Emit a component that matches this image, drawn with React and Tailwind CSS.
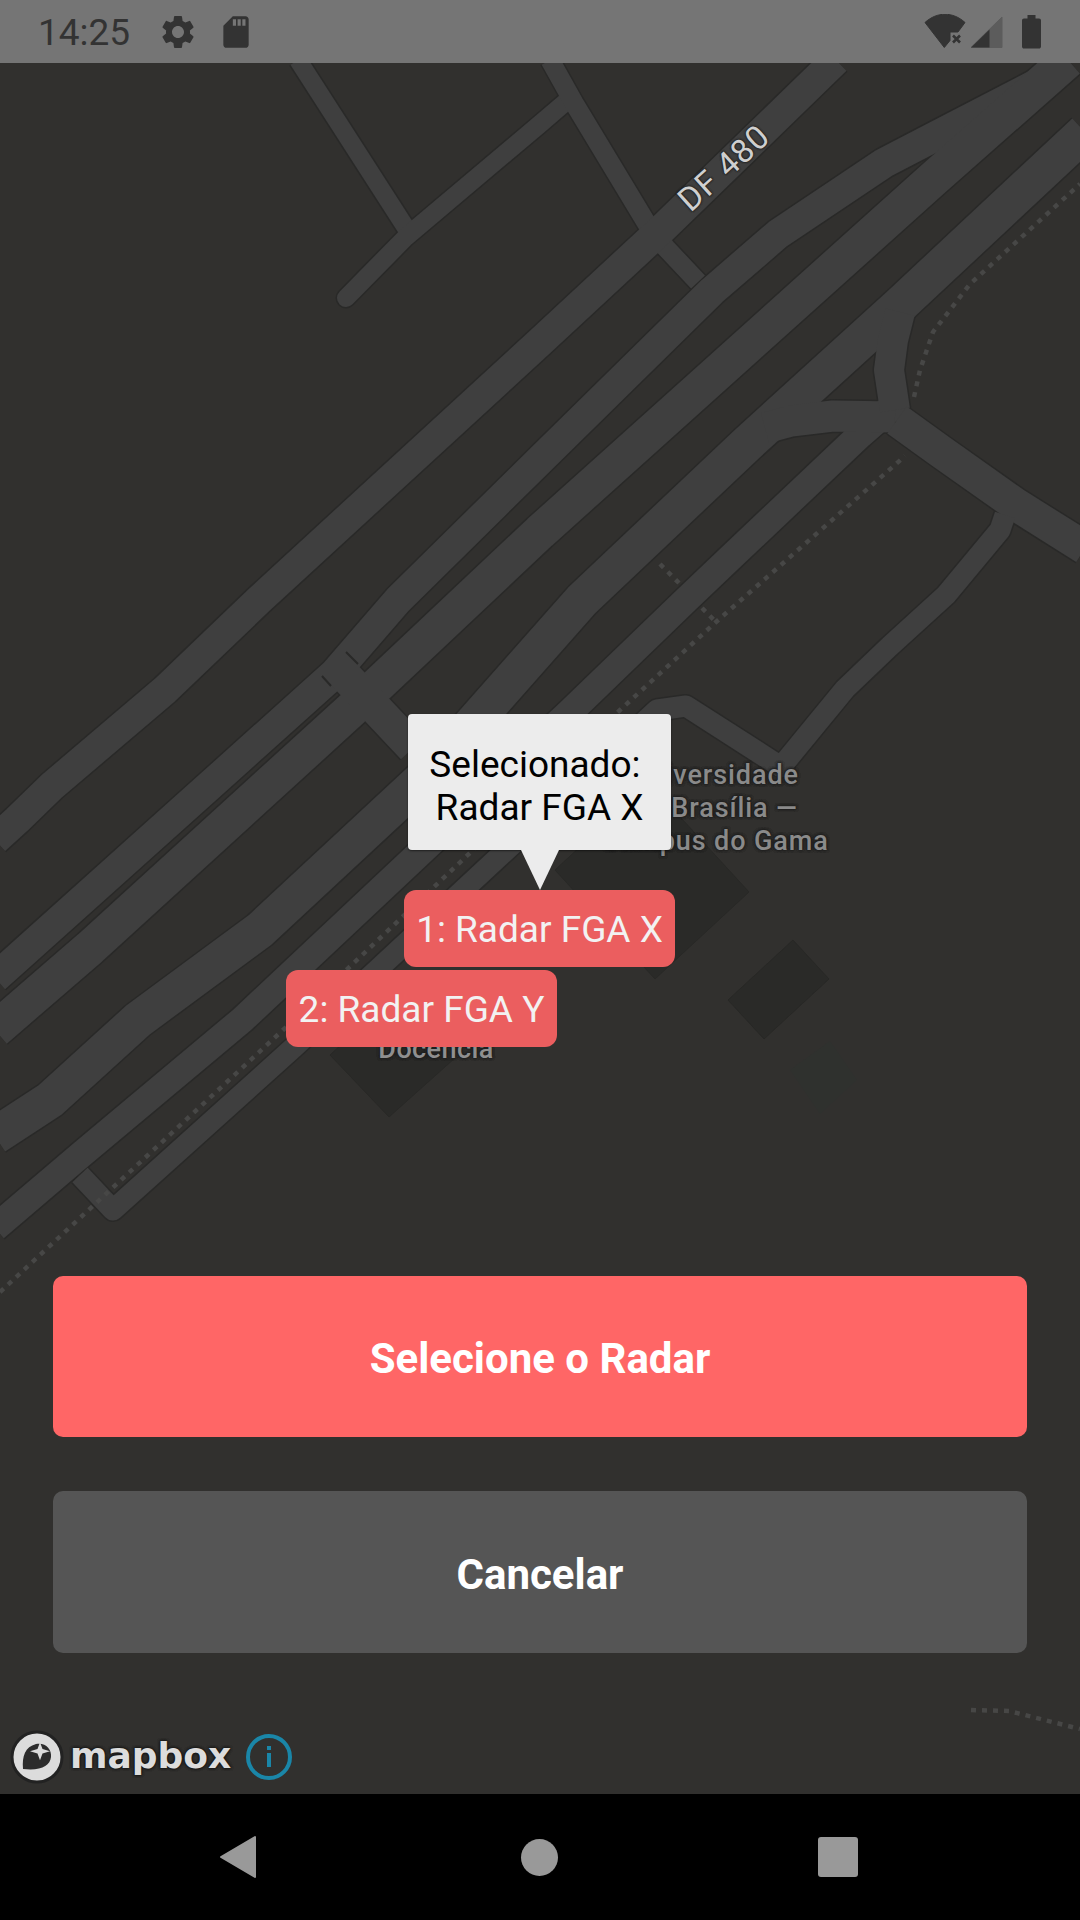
import React from "react";

const roads = [
  ["298,60 406,228", 18],
  ["346,298 406,237 540,124 568,100", 18],
  ["550,60 574,103 647,224 666,248 698,282", 19],
  ["836,60 664,227 540,342 259,600 165,690 52,786 17,820 -5,840", 30],
  ["1048,78 936,136 884,163 778,234 712,291 540,460 398,600 334,674 207,788 -5,978", 30],
  ["1068,60 932,180 540,532 351,710 90,948 -5,1030", 36],
  ["1085,132 901,304 747,444 582,600 430,772 260,930 138,1020 50,1100 -5,1136", 37],
  ["900,400 860,435 728,560 686,600 571,711 242,1020 83,1153 -5,1228", 27],
  ["765,428 791,421 833,416 895,417", 31],
  ["900,312 893,340 889,370 895,410", 30],
  ["897,420 940,451 1015,504 1085,548", 33],
  ["1005,515 1000,530 946,595 890,646 845,689 781,767 686,706 657,710 293,1048 113,1210 80,1175", 21],
  ["334,664 413,748", 33],
];

const dots = [
  "0,1292 283,1030 472,851 619,711 716,622 905,456",
  "914,397 920,370 933,332 970,284 1080,184",
  "660,564 679,583",
  "702,608 716,622",
  "971,1710 1009,1711 1080,1729",
];

function MapDrawing() {
  return (
    <svg className="absolute inset-0 h-full w-full" viewBox="0 63 1080 1731" preserveAspectRatio="none">
      <polygon points="555,870 655,979 749,892 649,783" fill="#2a2a28" stroke="#282826" />
      <polygon points="728,1000 793,940 829,979 764,1039" fill="#2a2a28" stroke="#282826" />
      <polygon points="330,1055 389,1117 455,1058 395,995" fill="#2a2a28" stroke="#282826" />
      <polygon points="790,1070 830,1041 857,1080 820,1114" fill="#2f312e" />
      <g fill="none" strokeLinejoin="round">
        {roads.map(([p, w], i) => (
          <polyline key={i} points={p} stroke="#292928" strokeWidth={w + 3} strokeLinecap={i === 1 ? "round" : "butt"} />
        ))}
        {roads.map(([p, w], i) => (
          <polyline key={i} points={p} stroke="#3f3f3f" strokeWidth={w} strokeLinecap={i === 1 ? "round" : "butt"} />
        ))}
        <polyline points="346,652 358,664" stroke="#292928" strokeWidth="2" />
        <polyline points="322,676 331,686" stroke="#292928" strokeWidth="2" />
        {dots.map((p, i) => (
          <polyline key={i} points={p} stroke="#474746" strokeWidth="4.5" strokeDasharray="5 6" />
        ))}
      </g>
    </svg>
  );
}

function Status() {
  return (
    <div className="flex h-[63px] shrink-0 items-center justify-between bg-[#757575] pl-[38px] pr-[39px] text-[#333333]">
      <div className="flex items-center">
        <span className="w-[92px] pt-[2px] text-[37px] leading-[42px] font-['Roboto',sans-serif]">14:25</span>
        <svg className="ml-[28px]" width="40" height="40" viewBox="0 0 24 24" fill="#333333">
          <path d="M19.14 12.94c.04-.3.06-.61.06-.94 0-.32-.02-.64-.07-.94l2.03-1.58a.49.49 0 0 0 .12-.61l-1.92-3.32a.488.488 0 0 0-.59-.22l-2.39.96c-.5-.38-1.03-.7-1.62-.94l-.36-2.54a.484.484 0 0 0-.48-.41h-3.84c-.24 0-.43.17-.47.41l-.36 2.54c-.59.24-1.13.57-1.62.94l-2.39-.96c-.22-.08-.47 0-.59.22L2.74 8.87c-.12.21-.08.47.12.61l2.03 1.58c-.05.3-.09.63-.09.94s.02.64.07.94l-2.03 1.58a.49.49 0 0 0-.12.61l1.92 3.32c.12.22.37.29.59.22l2.39-.96c.5.38 1.03.7 1.62.94l.36 2.54c.05.24.24.41.48.41h3.84c.24 0 .44-.17.47-.41l.36-2.54c.59-.24 1.13-.56 1.62-.94l2.39.96c.22.08.47 0 .59-.22l1.92-3.32c.12-.22.07-.47-.12-.61l-2.01-1.58zM12 15.6c-1.98 0-3.6-1.62-3.6-3.6s1.62-3.6 3.6-3.6 3.6 1.62 3.6 3.6-1.62 3.6-3.6 3.6z" />
        </svg>
        <svg className="ml-[19px]" width="38" height="38" viewBox="0 0 24 24" fill="#333333">
          <path d="M18 2h-8L4.02 8 4 20c0 1.1.9 2 2 2h12c1.1 0 2-.9 2-2V4c0-1.1-.9-2-2-2zm-6 6h-2V4h2v4zm3 0h-2V4h2v4zm3 0h-2V4h2v4z" />
        </svg>
      </div>
      <svg width="119" height="36" viewBox="922 13 119 36">
        <path d="M944.3 46.5 925 21.5 C937 10.5 953 10.5 965 21.5 L958 31 H950 V39.5 Z" fill="#333333" strokeLinejoin="round" stroke="#333333" strokeWidth="1" />
        <path d="M953 34.5 960 41.5 M960 34.5 953 41.5" stroke="#333333" strokeWidth="2.6" />
        <path d="M971 46.5 1002 16 V46.5 Z" fill="#5c5c5c" strokeLinejoin="round" stroke="#5c5c5c" strokeWidth="1" />
        <path d="M971 46.5 989.5 28.5 V46.5 Z" fill="#333333" />
        <path d="M1027.5 14 H1035.5 V17.5 H1039 C1040.2 17.5 1041 18.3 1041 19.5 V45.5 C1041 46.8 1040.2 47.6 1039 47.6 H1024 C1022.8 47.6 1022 46.8 1022 45.5 V19.5 C1022 18.3 1022.8 17.5 1024 17.5 H1027.5 Z" fill="#333333" />
      </svg>
    </div>
  );
}

function Nav() {
  return (
    <div className="flex h-[126px] shrink-0 items-center bg-black pl-[219px]">
      <svg width="38" height="44" viewBox="0 0 38 44">
        <path d="M36 2 V42 L2 22 Z" fill="#999999" stroke="#999999" strokeWidth="2" strokeLinejoin="round" />
      </svg>
      <div className="ml-[264px] h-[37px] w-[37px] rounded-full bg-[#999999]" />
      <div className="ml-[260px] h-[40px] w-[40px] rounded-[3px] bg-[#999999]" />
    </div>
  );
}

const halo = "[text-shadow:0_0_3px_#1f1f1f,0_0_3px_#1f1f1f,0_0_3px_#1f1f1f,0_0_3px_#1f1f1f]";

export default function App() {
  return (
    <div className="flex h-[1920px] w-[1080px] flex-col overflow-hidden font-['Roboto',sans-serif]">
      <Status />
      <main className="relative flex min-h-0 flex-1 flex-col justify-end bg-[#31302e] px-[53px] pb-[141px]">
        <MapDrawing />

        <span className="absolute left-[662px] top-[87px] w-[124px] -rotate-[42deg] whitespace-nowrap text-center text-[33px] leading-[36px] font-normal tracking-[1px] text-[#cfcfcf] [text-shadow:0_0_2px_#1f1f1f,0_0_2px_#1f1f1f,0_0_2px_#1f1f1f]">
          DF 480
        </span>

        <div className={`absolute left-[595px] top-[696px] w-[240px] text-center text-[27px] leading-[33px] font-medium tracking-[0.9px] text-[#8a8a8a] ${halo}`}>
          <div>Universidade</div>
          <div>de Brasília —</div>
          <div>Campus do Gama</div>
        </div>
        <div className={`absolute left-[336px] top-[970px] w-[200px] text-center text-[27px] leading-[33px] font-medium tracking-[0.4px] text-[#8f8f8f] ${halo}`}>
          Docência
        </div>

        <div className="absolute left-[408px] top-[651px] flex w-[263px] flex-col items-center">
          <div className="w-full whitespace-pre rounded-[4px] bg-[#ececec] pb-[21px] pt-[29px] text-center text-[37px] leading-[43px] text-black shadow-[0_1px_2px_rgba(0,0,0,0.5)]">
            {"Selecionado: \nRadar FGA X"}
          </div>
          <div className="h-0 w-0 border-l-[19px] border-r-[19px] border-t-[40px] border-l-transparent border-r-transparent border-t-[#ececec]" />
        </div>

        <div className="absolute left-[404px] top-[827px] flex h-[77px] w-[271px] items-center justify-center rounded-[12px] bg-[#eb5e5f] pt-[2px] text-[37px] text-[#f2f2f2]">
          1: Radar FGA X
        </div>
        <div className="absolute left-[286px] top-[907px] flex h-[77px] w-[271px] items-center justify-center rounded-[12px] bg-[#eb5e5f] pt-[2px] text-[37px] text-[#f2f2f2]">
          2: Radar FGA Y
        </div>

        <div className="relative flex h-[161px] items-center justify-center rounded-[10px] bg-[#ff6666] pt-[4px] text-[42px] font-bold text-white">
          Selecione o Radar
        </div>
        <div className="relative mt-[54px] flex h-[162px] items-center justify-center rounded-[10px] bg-[#555555] pt-[4px] text-[42px] font-bold text-white">
          Cancelar
        </div>

        <div className="absolute bottom-[9px] left-[10px] flex h-[56px] items-center">
          <svg width="54" height="54" viewBox="0 0 54 54">
            <circle cx="27" cy="27" r="25" fill="#dcdcdc" stroke="#222222" strokeWidth="3" />
            <path d="M13 39 C12 26 15 17 26 14 C35 12 42 19 41 27 C40 36 31 41 13 39 Z" fill="#2c2c2c" />
            <path d="M30 17 L32.5 24.5 L40 27 L32.5 29.5 L30 37 L27.5 29.5 L20 27 L27.5 24.5 Z" fill="#dcdcdc" transform="translate(0 -3) scale(1 0.9)" />
          </svg>
          <span className="ml-[6px] pb-[3px] text-[36px] leading-[44px] font-bold text-[#dcdcdc] font-['DejaVu_Sans',sans-serif] [text-shadow:0_0_3px_#161616,0_0_3px_#161616,0_0_3px_#161616]">
            mapbox
          </span>
          <svg className="ml-[15px]" width="46" height="46" viewBox="0 0 46 46">
            <circle cx="23" cy="23" r="21" fill="none" stroke="#1a86a8" strokeWidth="4" />
            <rect x="21" y="19" width="4" height="14" fill="#1a86a8" />
            <rect x="21" y="12" width="4" height="4" fill="#1a86a8" />
          </svg>
        </div>
      </main>
      <Nav />
    </div>
  );
}
